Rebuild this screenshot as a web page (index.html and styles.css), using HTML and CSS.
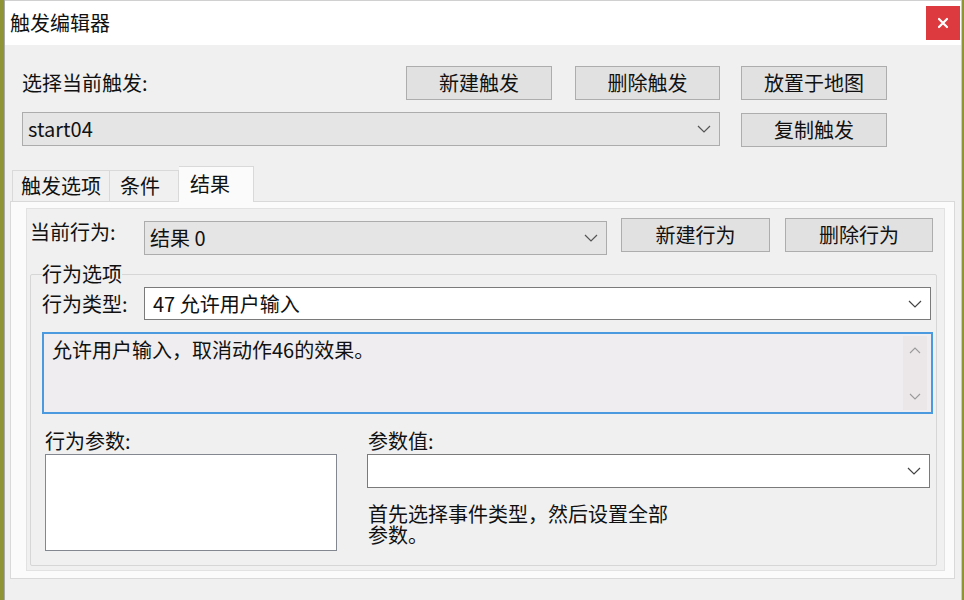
FILE: index.html
```html
<!DOCTYPE html>
<html lang="zh-CN">
<head>
    <meta charset="UTF-8">
    <title>触发编辑器</title>
    <link rel="stylesheet" href="styles.css">
</head>
<body>

    <div class="window">
        <div class="titlebar">
            <span class="title">触发编辑器</span>
            <button class="close">
                <svg width="12" height="12" viewBox="0 0 12 12"><path d="M2 2 L10 10 M10 2 L2 10" stroke="#fff" stroke-width="2.2" stroke-linecap="round"/></svg>
            </button>
        </div>

        <!-- trigger select -->
        <div class="header">
            <div class="header-row">
                <span class="label">选择当前触发:</span>
                <button class="btn btn-new">新建触发</button>
                <button class="btn btn-del">删除触发</button>
            </div>
            <button class="btn">放置于地图</button>
            <div class="combo combo-gray combo-trigger">
                <span>start04</span>
                <svg class="chev" width="14" height="8" viewBox="0 0 14 8"><polyline points="1,1 7,7 13,1" fill="none" stroke="#555" stroke-width="1.2"/></svg>
            </div>
            <button class="btn btn-copy">复制触发</button>
        </div>

        <div class="tabs">
            <div class="tab tab-opts">触发选项</div>
            <div class="tab tab-cond">条件</div>
            <div class="tab tab-result active">结果</div>
        </div>

        <div class="tab-page">
            <div class="page-inner">
                <div class="action-row">
                    <span class="label action-label">当前行为:</span>
                    <div class="combo combo-gray combo-action">
                        <span>结果 0</span>
                        <svg class="chev" width="14" height="8" viewBox="0 0 14 8"><polyline points="1,1 7,7 13,1" fill="none" stroke="#555" stroke-width="1.2"/></svg>
                    </div>
                    <button class="btn btn-act1">新建行为</button>
                    <button class="btn btn-act2">删除行为</button>
                </div>

                <fieldset class="group">
                    <legend>行为选项</legend>
                    <div class="type-row">
                        <span class="label type-label">行为类型:</span>
                        <div class="combo combo-white combo-type">
                            <span>47 允许用户输入</span>
                            <svg class="chev" width="14" height="8" viewBox="0 0 14 8"><polyline points="1,1 7,7 13,1" fill="none" stroke="#444" stroke-width="1.2"/></svg>
                        </div>
                    </div>

                    <div class="desc">
                        <p class="desc-text">允许用户输入，取消动作46的效果。</p>
                        <div class="scrollbar">
                            <svg width="12" height="7" viewBox="0 0 12 7"><polyline points="1,6 6,1 11,6" fill="none" stroke="#9a9a9a" stroke-width="1.1"/></svg>
                            <svg width="12" height="7" viewBox="0 0 12 7"><polyline points="1,1 6,6 11,1" fill="none" stroke="#9a9a9a" stroke-width="1.1"/></svg>
                        </div>
                    </div>

                    <div class="params">
                        <div class="param-col">
                            <span class="label">行为参数:</span>
                            <div class="listbox"></div>
                        </div>
                        <div class="value-col">
                            <span class="label">参数值:</span>
                            <div class="combo combo-white combo-value">
                                <span></span>
                                <svg class="chev" width="14" height="8" viewBox="0 0 14 8"><polyline points="1,1 7,7 13,1" fill="none" stroke="#444" stroke-width="1.2"/></svg>
                            </div>
                            <p class="hint">首先选择事件类型，然后设置全部参数。</p>
                        </div>
                    </div>
                </fieldset>
            </div>
        </div>
    </div>

</body>
</html>
```

FILE: styles.css
```css
body {
    margin: 0;
    padding: 0;
    background: #8f9436;
    font-family: "Noto Sans CJK SC", "Microsoft YaHei", sans-serif;
    font-size: 20px;
    color: #111;
    overflow: hidden;
}

.window {
    margin-left: 4px;
    width: 958px;
    height: 600px;
    box-sizing: border-box;
    background: #f0f0f0;
    border-left: 1px solid #a8a8a8;
    border-right: 1px solid #c8c8c8;
}

.titlebar {
    height: 45px;
    background: #fff;
    display: flex;
    align-items: center;
    justify-content: space-between;
    padding-left: 5px;
    border-top: 1px solid #d0d0d0;
    box-sizing: border-box;
}

.title {
    line-height: 22px;
}

.close {
    width: 34px;
    height: 34px;
    margin-right: 1px;
    border: none;
    padding: 0;
    background: #dd3a3f;
    display: flex;
    align-items: center;
    justify-content: center;
}

.label {
    line-height: 22px;
    white-space: nowrap;
}

.btn {
    font-family: inherit;
    font-size: 20px;
    color: #111;
    background: #e1e1e1;
    border: 1px solid #adadad;
    padding: 0;
    height: 34px;
    line-height: 30px;
    box-sizing: border-box;
}

/* top area */
.header {
    display: grid;
    grid-template-columns: 698px 146px;
    column-gap: 21px;
    row-gap: 12px;
    padding-left: 17px;
    margin-top: 21px;
}

.header-row {
    display: flex;
    align-items: center;
}

.header-row .label {
    flex: 1;
}

.btn-new {
    width: 146px;
}

.btn-del {
    width: 145px;
    margin-left: 23px;
}

.btn-copy {
    margin-top: 1px;
}

.combo {
    display: flex;
    align-items: center;
    justify-content: space-between;
    box-sizing: border-box;
    height: 34px;
    padding: 0 8px 0 5px;
    line-height: 22px;
}

.combo-gray {
    background: #e5e5e5;
    border: 1px solid #acacac;
}

.combo-white {
    background: #fff;
    border: 1px solid #7a7a7a;
}

.chev {
    flex: none;
}

/* tabs */
.tabs {
    display: flex;
    align-items: flex-end;
    margin-left: 7px;
    margin-top: 19px;
    height: 35px;
}

.tab {
    height: 31px;
    box-sizing: border-box;
    line-height: 30px;
    padding-left: 8px;
    background: #f0f0f0;
    border: 1px solid #d9d9d9;
    border-bottom: none;
}

.tab-opts {
    width: 98px;
}

.tab-cond {
    width: 69px;
    padding-left: 10px;
    border-left: none;
}

.tab-result {
    width: 75px;
    padding-left: 11px;
    border-left: none;
}

.tab.active {
    height: 36px;
    margin-bottom: -1px;
    background: #fbfbfb;
    position: relative;
    line-height: 34px;
}

.tab-page {
    margin-left: 5px;
    width: 945px;
    height: 378px;
    box-sizing: border-box;
    background: #fbfbfb;
    border: 1px solid #d9d9d9;
    padding: 6px 0 0 15px;
}

.page-inner {
    width: 919px;
    height: 363px;
    box-sizing: border-box;
    background: #f0f0f0;
    border: 1px solid #e2e2e2;
    padding: 9px 0 0 3px;
}

.action-row {
    display: flex;
    align-items: flex-start;
}

.action-label {
    width: 114px;
    margin-top: 3px;
}

.combo-action {
    width: 463px;
    margin-top: 3px;
}

.btn-act1 {
    width: 149px;
    margin-left: 14px;
}

.btn-act2 {
    width: 148px;
    margin-left: 15px;
}

/* group box */
.group {
    margin: 8px 0 0 0;
    width: 907px;
    box-sizing: border-box;
    border: 1px solid #d6d6d6;
    border-radius: 2px;
    padding: 0 5px 14px 11px;
    min-width: 0;
}

.group legend {
    padding: 0;
    line-height: 22px;
}

.type-row {
    display: flex;
    align-items: center;
    margin-top: 2px;
}

.type-label {
    width: 102px;
}

.combo-type {
    width: 787px;
    height: 33px;
    padding-left: 8px;
}

.desc {
    display: flex;
    margin-top: 12px;
    margin-right: -2px;
    height: 82px;
    box-sizing: border-box;
    border: 2px solid #4b9ae0;
    background: #efedef;
}

.desc-text {
    flex: 1;
    margin: 0;
    padding: 5px 0 0 8px;
    line-height: 22px;
}

.scrollbar {
    width: 24px;
    margin: 2px 4px 2px 0;
    background: #ebe7e9;
    display: flex;
    flex-direction: column;
    align-items: center;
    justify-content: space-between;
    padding: 11px 0 10px;
    box-sizing: border-box;
}

.params {
    display: flex;
    margin-top: 16px;
    padding-left: 3px;
}

.param-col {
    width: 292px;
    display: flex;
    flex-direction: column;
}

.listbox {
    margin-top: 2px;
    height: 97px;
    box-sizing: border-box;
    background: #fff;
    border: 1px solid #828790;
}

.value-col {
    margin-left: 30px;
    display: flex;
    flex-direction: column;
}

.value-col .label {
    padding-left: 1px;
}

.combo-value {
    width: 563px;
    margin-top: 2px;
}

.hint {
    margin: 15px 0 0 1px;
    width: 306px;
    line-height: 21px;
}
```
